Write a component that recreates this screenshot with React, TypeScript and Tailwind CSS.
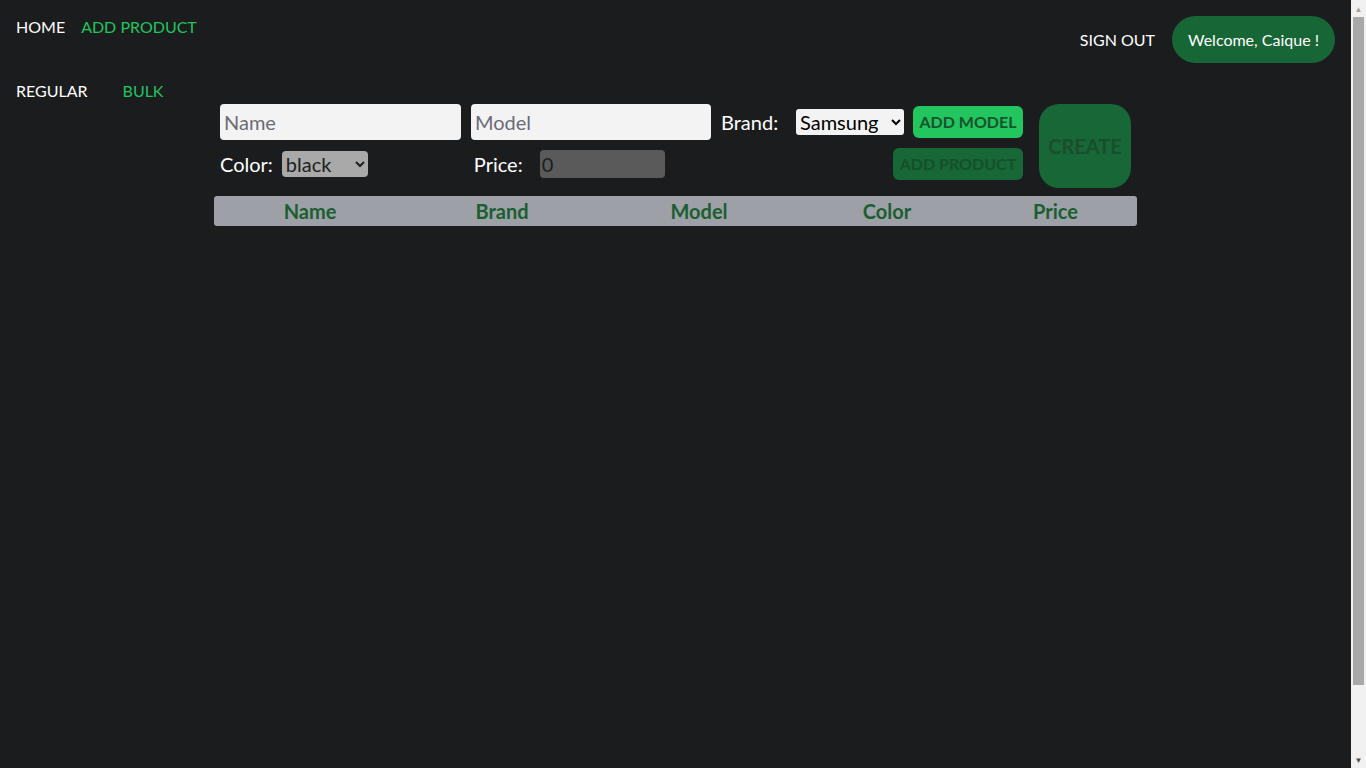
import React, { useState } from 'react';

const FONT = "font-['Lato','Open_Sans',sans-serif]";

export default function App() {
  const [tab, setTab] = useState<'regular' | 'bulk'>('regular');
  const [name, setName] = useState('');
  const [model, setModel] = useState('');
  const [brand, setBrand] = useState('Samsung');
  const [color, setColor] = useState('black');

  return (
    <div className={`${FONT} flex h-screen overflow-hidden bg-[#1b1c1e] text-white`}>
      <div className="flex-1 min-w-0">
        {/* Top nav */}
        <nav className="flex items-start justify-between px-4">
          <div className="flex gap-4 pt-[15px] text-[16px]">
            <a className="text-white">HOME</a>
            <a className="text-[#22c55e]">ADD PRODUCT</a>
          </div>
          <div className="flex items-center gap-[17px] pt-4">
            <button className="text-[16px] text-white">SIGN OUT</button>
            <div className="h-[47px] px-4 rounded-full bg-[#176636] flex items-center text-[16px] text-white">
              Welcome, Caique !
            </div>
          </div>
        </nav>

        {/* Tabs */}
        <div className="flex gap-[35px] pl-4 mt-4 text-[16px] leading-[24px]">
          <button
            onClick={() => setTab('regular')}
            className={tab === 'regular' ? 'text-white' : 'text-[#22c55e]'}
          >
            REGULAR
          </button>
          <button
            onClick={() => setTab('bulk')}
            className={tab === 'bulk' ? 'text-white' : 'text-[#22c55e]'}
          >
            BULK
          </button>
        </div>

        {/* Form */}
        <main className="w-[923px] mx-auto mt-[1px]">
          <div className="flex gap-2 items-start">
            <div className="flex flex-col pl-[6px]">
              <div className="flex items-center gap-[10px]">
                <input
                  value={name}
                  onChange={e => setName(e.target.value)}
                  placeholder="Name"
                  className="w-[241px] h-9 rounded bg-[#f3f3f3] px-1 text-[20px] text-black placeholder:text-[#6b6b76] outline-none"
                />
                <input
                  value={model}
                  onChange={e => setModel(e.target.value)}
                  placeholder="Model"
                  className="w-[240px] h-9 rounded bg-[#f3f3f3] px-1 text-[20px] text-black placeholder:text-[#6b6b76] outline-none"
                />
                <span className="text-[20px] w-[65px]">Brand:</span>
                <select
                  value={brand}
                  onChange={e => setBrand(e.target.value)}
                  className="h-[26px] w-[108px] rounded-[3px] bg-[#f3f3f3] text-black text-[20px] leading-none"
                >
                  <option>Samsung</option>
                  <option>Apple</option>
                  <option>Motorola</option>
                </select>
                <button className="ml-[-1px] h-8 w-[110px] rounded-md bg-[#22c55e] text-[#14532d] font-bold text-[16px]">
                  ADD MODEL
                </button>
              </div>
              <div className="flex items-center mt-2 h-8">
                <span className="text-[20px]">Color:</span>
                <select
                  value={color}
                  onChange={e => setColor(e.target.value)}
                  disabled
                  className="ml-[9px] h-[26px] w-[86px] rounded bg-[#a9a9a9] text-[#1f1f1f] text-[20px] leading-none"
                >
                  <option>black</option>
                  <option>white</option>
                  <option>blue</option>
                </select>
                <span className="ml-[106px] text-[20px]">Price:</span>
                <input
                  disabled
                  value="0"
                  readOnly
                  className="ml-[17px] w-[125px] h-7 rounded bg-[#5a5a5a] text-[#1e1e1e] text-[20px] px-0.5 outline-none"
                />
                <button
                  disabled
                  className="ml-auto h-8 w-[130px] rounded-md bg-[#186736] text-[#155029] font-bold text-[16px]"
                >
                  ADD PRODUCT
                </button>
              </div>
            </div>
            <button
              disabled
              className="ml-2 w-[92px] h-[84px] rounded-[20px] bg-[#186736] text-[#1a4e2c] font-bold text-[20px]"
            >
              CREATE
            </button>
          </div>

          <div className="mt-2 grid grid-cols-[192px_192px_202px_174px_1fr] h-[30px] items-center rounded-[3px] bg-[#9ea0a8] text-[#1b5e30] font-bold text-[20px] text-center">
            <div>Name</div>
            <div>Brand</div>
            <div>Model</div>
            <div>Color</div>
            <div>Price</div>
          </div>
        </main>
      </div>

      {/* Browser scrollbar */}
      <div className="w-[15px] flex-none flex flex-col bg-[#f1f1f1]">
        <div className="h-[17px] flex items-center justify-center text-[#a3a3a3] text-[8px] leading-none">▲</div>
        <div className="mx-[2px] h-[668px] bg-[#a8a8a8]" />
        <div className="flex-1" />
        <div className="h-[17px] flex items-center justify-center text-[#505050] text-[8px] leading-none">▼</div>
      </div>
    </div>
  );
}
